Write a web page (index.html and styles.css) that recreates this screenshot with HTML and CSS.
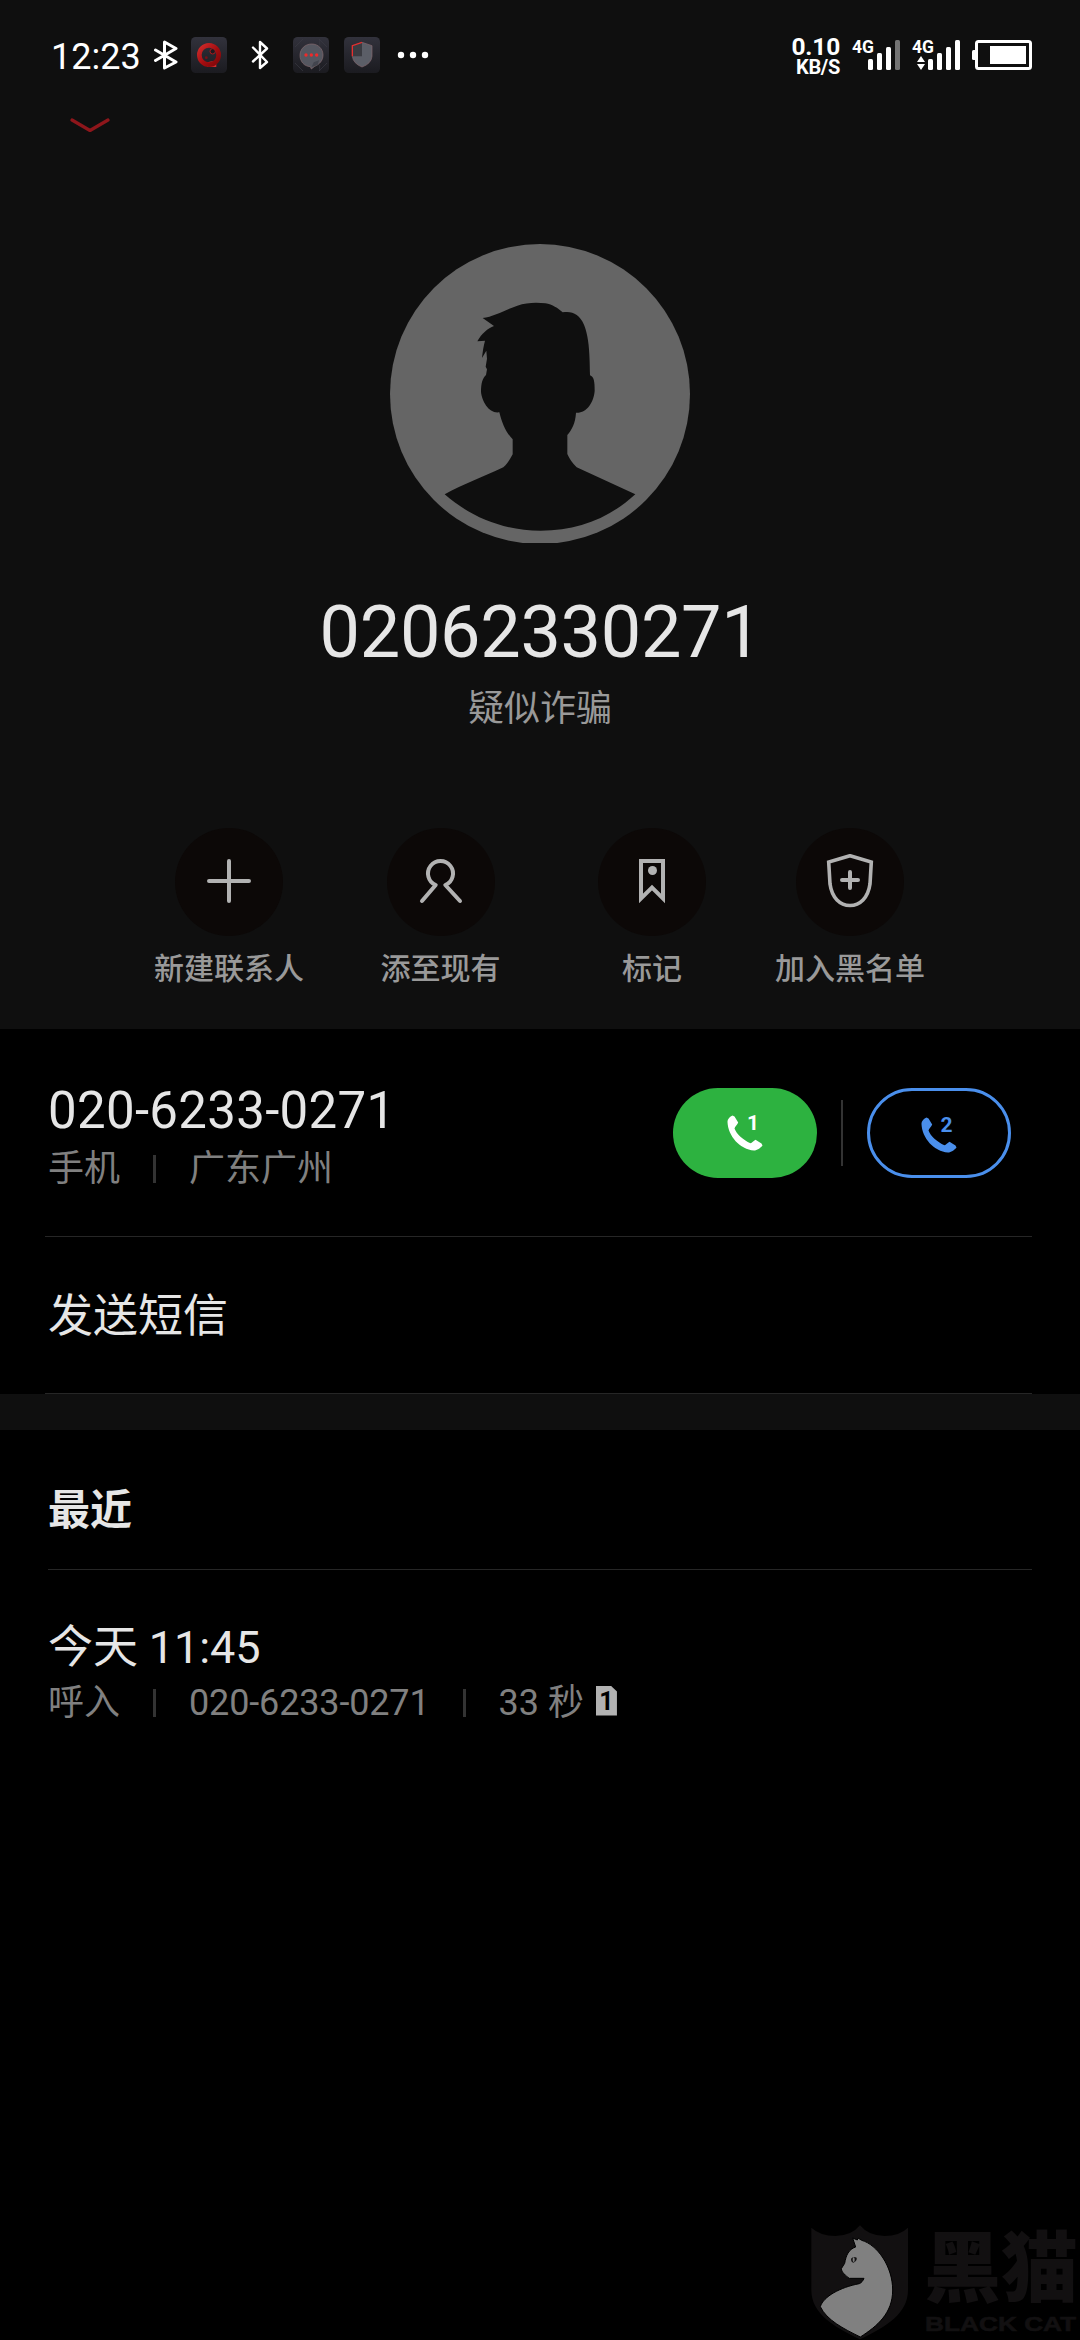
FILE: index.html
```html
<!DOCTYPE html>
<html lang="zh-CN">
<head>
    <meta charset="UTF-8">
    <title>02062330271</title>
    <link rel="stylesheet" href="styles.css">
</head>
<body>
    <div class="hero">
        <div class="status-bar">
            <span class="clock">12:23</span>
            <svg class="bt-bold" viewBox="0 0 24 30">
                <path d="M1.5 10 L22 22 L10.5 28 V2 L22 8.500 L1.500 20.500" />
            </svg>
            <svg class="app-icon app-music" viewBox="0 0 108 108">
                <defs>
                    <linearGradient id="tile" x1="0" y1="0" x2="0" y2="1">
                        <stop offset="0" stop-color="#32323c" />
                        <stop offset="1" stop-color="#1b1b20" />
                    </linearGradient>
                    <linearGradient id="ring" x1="0" y1="0" x2="1" y2="1">
                        <stop offset="0" stop-color="#cf2b2b" />
                        <stop offset=".55" stop-color="#a30d10" />
                        <stop offset="1" stop-color="#7c0709" />
                    </linearGradient>
                </defs>
                <rect width="108" height="108" rx="14" fill="url(#tile)" />
                <path d="M40 80 Q54 72 76 72 V90 H50 Z" fill="#d02c2c" />
                <circle cx="54" cy="54" r="29" fill="none" stroke="url(#ring)" stroke-width="14" />
                <circle cx="65" cy="43" r="8" fill="#1c1a20" stroke="#b0181b" stroke-width="3" />
                <circle cx="46" cy="62" r="4" fill="#7a1115" />
            </svg>
            <svg class="bt-thin" viewBox="0 0 18 30">
                <path d="M2 7.500 L16 22 L9 28 V2 L16 8.500 L2 21.500" />
            </svg>
            <svg class="app-icon app-chat" viewBox="0 0 108 108">
                <rect width="108" height="108" rx="14" fill="url(#tile)" />
                <path d="M6 30 L30 6 M78 6 L102 30 M6 78 L30 102 M78 102 L102 78 M80 6 V26 M80 84 V102" stroke="#3b3b44" stroke-width="2" />
                <path d="M56 21 C76 21 90 36 90 54 C90 70 80 82 65 88 L55 96 L52 89 C33 88 21 73 21 55 C21 36 36 21 56 21 Z" fill="#555760" stroke="#886c71" stroke-width="2" />
                <path d="M56 90 L62 76 L78 70 L74 84 Z" fill="#43454e" />
                <circle cx="39" cy="54" r="5" fill="#f02a2a" />
                <circle cx="55" cy="54" r="5" fill="#f02a2a" />
                <circle cx="71" cy="54" r="5" fill="#f02a2a" />
            </svg>
            <svg class="app-icon app-guard" viewBox="0 0 108 108">
                <rect width="108" height="108" rx="14" fill="url(#tile)" />
                <path d="M54 16 L84 26 V58 Q82 80 54 90 Q28 80 25 58 V26 Z" fill="#5b5e67" />
                <path d="M54 16 V58 H25 V26 Z" fill="#3a3b41" />
                <path d="M54 16 L84 26 V58 Q82 80 54 90" fill="none" stroke="#85686e" stroke-width="2" />
                <path d="M25 58 Q28 80 54 90" fill="none" stroke="#85686e" stroke-width="2" />
                <path d="M25 58 V26 L54 16" fill="none" stroke="#e62f2f" stroke-width="4" />
            </svg>
            <svg class="more" viewBox="0 0 32 8">
                <circle cx="4" cy="4" r="3.200" />
                <circle cx="16" cy="4" r="3.200" />
                <circle cx="28" cy="4" r="3.200" />
            </svg>

            <div class="net-speed">
                <span class="net-value">0.10</span>
                <span class="net-unit">KB/S</span>
            </div>
            <svg class="signal" viewBox="0 0 48 30">
                <text x="0" y="13">4G</text>
                <rect x="16" y="19" width="5" height="11" rx="1.500" />
                <rect x="25" y="13" width="5" height="17" rx="1.500" />
                <rect x="34" y="7" width="5" height="23" rx="1.500" />
                <rect class="dim" x="43" y="0" width="5" height="30" rx="1.500" />
            </svg>
            <svg class="signal signal-second" viewBox="0 0 48 30">
                <text x="0" y="13">4G</text>
                <path d="M9 16 L13 22 H5 Z M5 24 H13 L9 30 Z" />
                <rect x="16" y="19" width="5" height="11" rx="1.500" />
                <rect x="25" y="13" width="5" height="17" rx="1.500" />
                <rect x="34" y="7" width="5" height="23" rx="1.500" />
                <rect x="43" y="0" width="5" height="30" rx="1.500" />
            </svg>
            <svg class="battery" viewBox="0 0 60 30">
                <rect x="0" y="10" width="5" height="10" rx="1.500" fill="#fff" />
                <rect x="4.500" y="1.500" width="54" height="27" rx="2" fill="none" stroke="#fff" stroke-width="3" />
                <rect x="18" y="6" width="36" height="18" fill="#fff" />
            </svg>
        </div>

        <svg class="collapse" viewBox="0 0 40 18">
            <path d="M2 4 L20 14.500 L38 4" />
        </svg>

        <svg class="avatar" viewBox="60 42 900 897">
            <circle cx="510" cy="492" r="450" fill="#656565" />
            <path fill="#0f0f0f" d="M338 264 C372 260 408 238 442 227 C470 217 502 217 526 220 C548 224 563 234 578 247
                C606 242 628 252 642 284 C656 320 659 360 660 436 C672 440 674 455 674 482 C672 516 650 550 618 548
                C616 580 606 598 592 615 V672 C598 686 608 700 620 712 L796 793 C716 866 622 902 512 902
                C400 902 300 860 224 793 C280 762 340 740 400 712 C412 702 420 688 428 673 V628
                C410 610 396 582 388 547 C358 552 336 515 333 486 C333 460 338 444 348 435 L351 418
                L347 410 L351 386 L349 362 L336 384 C338 366 340 350 345 332 L322 334 C334 312 354 294 372 288 Z" />
        </svg>

        <h1 class="number">02062330271</h1>
        <p class="tag">疑似诈骗</p>

        <div class="actions">
            <div class="action">
                <div class="circle">
                    <svg viewBox="0 0 54 54">
                        <path d="M27 7 V47 M7 27 H47" />
                    </svg>
                </div>
                <span>新建联系人</span>
            </div>
            <div class="action action-narrow">
                <div class="circle">
                    <svg viewBox="0 0 54 54">
                        <path d="M8 47 L21.700 31 A12.500 12.500 0 1 1 31.300 31 L46 47" />
                    </svg>
                </div>
                <span>添至现有</span>
            </div>
            <div class="action">
                <div class="circle">
                    <svg class="square" viewBox="0 0 54 54">
                        <path d="M16 7 H38 V44.500 L27 33.500 L16 44.500 Z" />
                        <circle cx="27.500" cy="16.500" r="4.500" />
                    </svg>
                </div>
                <span>标记</span>
            </div>
            <div class="action action-last">
                <div class="circle">
                    <svg class="square" viewBox="0 0 54 54">
                        <path class="shield" d="M27 1.700 L48.300 8 L47 30 C45 44 37 51.500 27 51.500 C17 51.500 9 44 7 30 L5.700 8 Z" />
                        <path class="plus" d="M27 18 V34 M19 26 H35" />
                    </svg>
                </div>
                <span>加入黑名单</span>
            </div>
        </div>
    </div>

    <div class="phone-row">
        <div class="phone-info">
            <div class="phone">020-6233-0271</div>
            <div class="meta">
                <span>手机</span>
                <i class="sep"></i>
                <span>广东广州</span>
            </div>
        </div>
        <div class="call-btn call-sim1">
            <svg viewBox="0 0 36 36">
                <path d="M5.500 .500 C3 1.500 .500 4 .500 7 C1 21 13 34.500 27 35.500 C30 35.500 33.500 33 35.500 30.500 L34.500 28.500 L28.500 24.800 C26.500 26 25 28 23.500 28.300 C16 25 9.500 19 7.500 13.500 C8 11.500 10.500 9.500 11.200 7.500 L7.500 1.500 Z" />
                <text x="20" y="15">1</text>
            </svg>
        </div>
        <div class="call-divider"></div>
        <div class="call-btn call-sim2">
            <svg viewBox="0 0 36 36">
                <path d="M5.500 .500 C3 1.500 .500 4 .500 7 C1 21 13 34.500 27 35.500 C30 35.500 33.500 33 35.500 30.500 L34.500 28.500 L28.500 24.800 C26.500 26 25 28 23.500 28.300 C16 25 9.500 19 7.500 13.500 C8 11.500 10.500 9.500 11.200 7.500 L7.500 1.500 Z" />
                <text x="19.500" y="15">2</text>
            </svg>
        </div>
    </div>
    <div class="line"></div>
    <div class="sms-row">发送短信</div>
    <div class="line"></div>
    <div class="band"></div>

    <h2 class="recent-title">最近</h2>
    <div class="line line-recent"></div>
    <div class="call-log">
        <div class="log-time">今天 11:45</div>
        <div class="meta">
            <span>呼入</span>
            <i class="sep"></i>
            <span class="log-number">020-6233-0271</span>
            <i class="sep"></i>
            <span>33 秒</span>
            <span class="sim">1</span>
        </div>
    </div>

    <div class="watermark">
        <svg viewBox="60 42 300 348">
            <path fill="#121011" d="M64 53 Q92 78 136 78 Q184 78 210 46 Q236 78 284 78 Q328 78 354 53 V240 C354 310 290 350 210 388 C130 350 64 310 64 240 Z" />
            <path fill="#808080" stroke="#000" stroke-width="3" d="M188 84 L202 90 L204 84 L215 91 C262 104 308 170 308 240 C308 310 262 348 211 381
                C160 356 110 330 91 290 C100 260 150 232 208 221 C215 218 219 212 222 205 L178 205
                C168 198 154 186 154 176 L164 160 C168 136 176 118 197 111 Z" />
            <path fill="#121011" d="M183 146 Q190 138 200 143 Q202 152 190 158 Q183 156 183 146 Z" />
            <ellipse cx="191" cy="149" rx="3" ry="7" fill="#808080" />
        </svg>
        <div class="watermark-text">
            <div class="wm-cn">黑猫</div>
            <div class="wm-en">BLACK CAT</div>
        </div>
    </div>
</body>
</html>
```

FILE: styles.css
```css
* {
    box-sizing: border-box;
    margin: 0;
    padding: 0;
}
body {
    width: 1080px;
    height: 2340px;
    position: relative;
    overflow: hidden;
    background-color: #000;
    color: #e6e6e6;
    font-family: Roboto, "Noto Sans CJK SC", sans-serif;
}
svg {
    display: block;
    flex-shrink: 0;
}

/* top part */
.hero {
    height: 1029px;
    display: flex;
    flex-direction: column;
    align-items: center;
    background-color: #0f0f0f;
}
.status-bar {
    width: 100%;
    height: 110px;
    padding: 0 48px 0 51px;
    display: flex;
    align-items: center;
    color: #fff;
}
.clock {
    width: 103px;
    font-size: 36px;
    line-height: 42px;
    padding-top: 4px;
}
.bt-bold, .bt-thin {
    height: 30px;
    fill: none;
    stroke: #fff;
    stroke-width: 3;
    stroke-linejoin: round;
    stroke-linecap: round;
}
.bt-bold {
    width: 24px;
}
.bt-thin {
    width: 18px;
    margin-left: 24px;
    stroke-width: 2.4;
}
.app-icon {
    width: 36px;
    height: 36px;
}
.app-music {
    margin-left: 13px;
}
.app-chat {
    margin-left: 24px;
}
.app-guard {
    margin-left: 15px;
}
.more {
    width: 32px;
    height: 8px;
    margin-left: 17px;
    fill: #fff;
}
.net-speed {
    width: 60px;
    margin-left: auto;
    margin-right: 12px;
    padding-top: 4px;
    display: flex;
    flex-direction: column;
    align-items: flex-end;
    font-weight: bold;
}
.net-value {
    font-size: 24.5px;
    line-height: 20px;
    letter-spacing: -0.2px;
}
.net-unit {
    font-size: 20px;
    line-height: 20px;
    letter-spacing: -0.3px;
}
.signal {
    width: 48px;
    height: 30px;
    fill: #fff;
    overflow: visible;
}
.signal text {
    font-size: 17.5px;
    font-weight: bold;
}
.signal .dim {
    fill: #747474;
}
.signal-second {
    margin-left: 12px;
}
.battery {
    width: 60px;
    height: 30px;
    margin-left: 12px;
}
.collapse {
    width: 40px;
    height: 18px;
    margin-top: 6px;
    margin-left: 70px;
    align-self: flex-start;
    fill: none;
    stroke: #8e161b;
    stroke-width: 3.2;
    stroke-linecap: round;
    stroke-linejoin: round;
}
.avatar {
    width: 300px;
    height: 299px;
    margin-top: 110px;
}
.number {
    margin-top: 48px;
    padding-left: 1px;
    font-size: 72px;
    font-weight: normal;
    line-height: 84px;
    letter-spacing: -0.3px;
}
.tag {
    margin-top: 7px;
    font-size: 36px;
    line-height: 54px;
    color: #999;
}
.actions {
    width: 100%;
    margin-top: 92px;
    padding-left: 123px;
    display: flex;
}
.action {
    width: 212px;
    display: flex;
    flex-direction: column;
    align-items: center;
}
.action-narrow {
    width: 211px;
}
.action-last {
    width: 184px;
}
.action span {
    margin-top: 15px;
    font-size: 30px;
    font-weight: 500;
    line-height: 36px;
    color: #999;
}
.circle {
    width: 108px;
    height: 108px;
    border-radius: 50%;
    display: flex;
    align-items: center;
    justify-content: center;
    background-color: #0c0807;
}
.circle svg {
    width: 54px;
    height: 54px;
    margin-top: -2px;
    fill: none;
    stroke: #b2b2b2;
    stroke-width: 4;
    stroke-linecap: round;
    stroke-linejoin: round;
}
.circle .square {
    stroke-linejoin: miter;
}
.circle .shield {
    stroke-width: 3.6;
}
.circle circle {
    fill: #b2b2b2;
    stroke: none;
}

/* phone number and sms */
.phone-row {
    height: 207px;
    padding: 0 69px 0 48px;
    display: flex;
    align-items: center;
}
.phone-info {
    flex: 1;
    align-self: flex-start;
    padding-top: 52px;
}
.phone {
    font-size: 51px;
    line-height: 60px;
    margin-bottom: 7px;
    letter-spacing: 0.3px;
}
.meta {
    display: flex;
    align-items: center;
    font-size: 36px;
    line-height: 42px;
    color: #808080;
}
.sep {
    width: 3px;
    height: 28px;
    margin: 0 33px;
    background-color: #333;
}
.call-btn {
    width: 144px;
    height: 90px;
    border-radius: 45px;
    display: flex;
    align-items: center;
    justify-content: center;
}
.call-btn svg {
    width: 36px;
    height: 36px;
    overflow: visible;
}
.call-btn text {
    font-size: 21px;
    font-weight: bold;
}
.call-sim1 {
    background-color: #2db240;
    fill: #fff;
}
.call-sim2 {
    border: 3px solid #4a8fec;
    fill: #4a8fec;
}
.call-sim2 svg {
    margin-top: 4px;
}
.call-divider {
    width: 2px;
    height: 66px;
    margin: 0 24px;
    background-color: #333;
}
.line {
    height: 1px;
    margin: 0 48px 0 45px;
    background-color: #262626;
}
.line-recent {
    margin-left: 48px;
}
.sms-row {
    height: 156px;
    padding: 3px 48px 0;
    font-size: 45px;
    line-height: 153px;
}
.band {
    height: 36px;
    background-color: #0f0f0f;
}

/* call log */
.recent-title {
    height: 139px;
    padding: 22px 48px 0;
    font-size: 42px;
    font-weight: bold;
    line-height: 117px;
}
.call-log {
    padding: 51px 48px 0;
}
.log-time {
    font-size: 45px;
    line-height: 54px;
    margin-bottom: 7px;
    letter-spacing: -0.1px;
}
.log-number {
    letter-spacing: -0.15px;
}
.sim {
    width: 21px;
    height: 30px;
    margin-left: 12px;
    margin-top: -5px;
    background-color: #b2b2b2;
    clip-path: polygon(0 0, 70% 0, 100% 20%, 100% 100%, 0 100%);
    color: #000;
    font-size: 25px;
    font-weight: bold;
    line-height: 32px;
    text-align: center;
}

.watermark {
    position: absolute;
    left: 810px;
    top: 2224px;
    display: flex;
    color: #121011;
}
.watermark svg {
    width: 100px;
    height: 116px;
}
.watermark-text {
    margin-left: 14px;
    padding-top: 8px;
    white-space: nowrap;
}
.wm-cn {
    font-size: 77px;
    font-weight: 900;
    line-height: 76px;
}
.wm-en {
    margin-top: 4px;
    margin-left: 1px;
    font-family: "Liberation Sans", sans-serif;
    font-size: 21px;
    font-weight: bold;
    line-height: 24px;
    -webkit-text-stroke: 0.6px #121011;
    transform: scaleX(1.25);
    transform-origin: left;
}
```
